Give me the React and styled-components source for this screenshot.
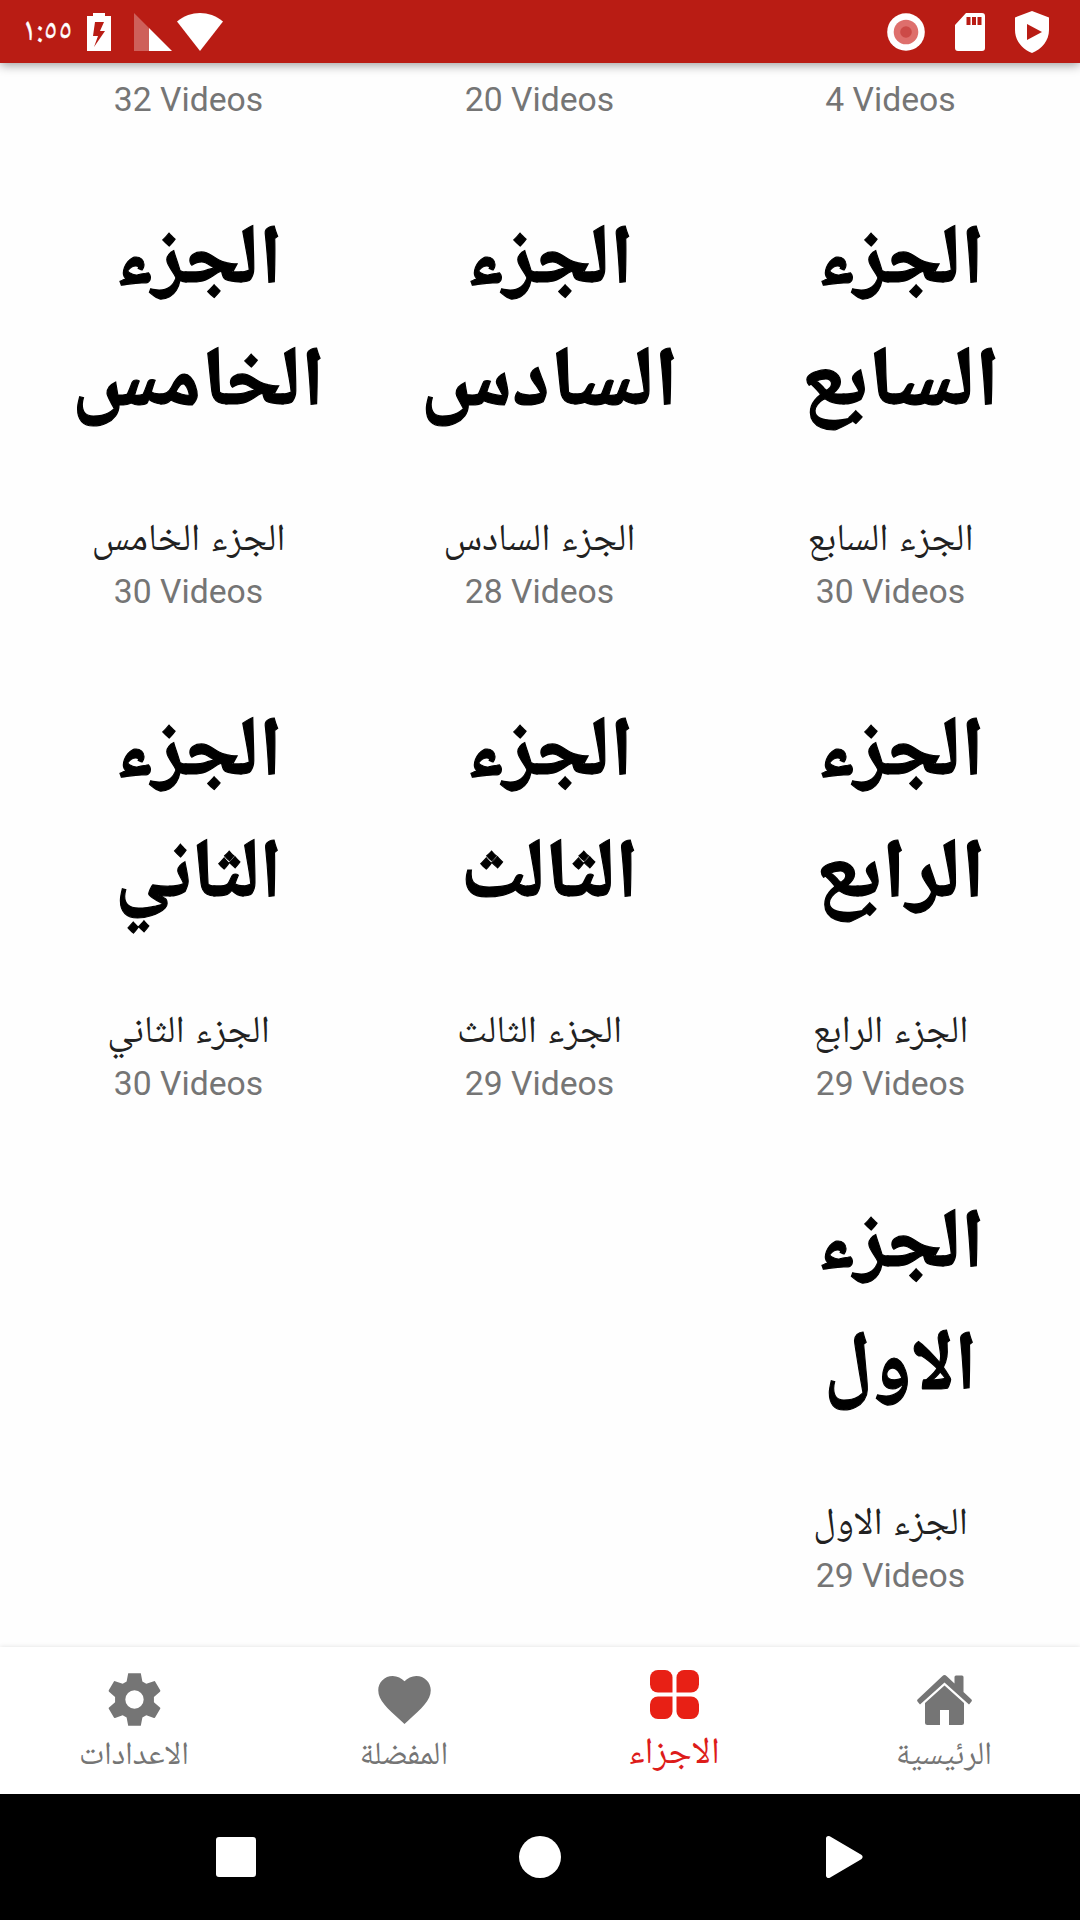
import React from "react";
import styled, { createGlobalStyle } from "styled-components";

const GlobalStyle = createGlobalStyle`
  * {
    box-sizing: border-box;
  }
  body {
    margin: 0;
    background: #fff;
    font-family: Roboto, "Noto Naskh Arabic", serif;
  }
`;

const Screen = styled.div`
  display: flex;
  flex-direction: column;
  width: 1080px;
  height: 1920px;
  overflow: hidden;
  background: #fefefe;
`;

const StatusBar = styled.header`
  position: relative;
  display: flex;
  justify-content: space-between;
  height: 63px;
  flex: none;
  padding: 0 31px 0 22px;
  background: #b91c14;
  box-shadow: 0 2px 10px rgba(0, 0, 0, 0.4);
`;

const StatusGroup = styled.div`
  display: flex;
  align-items: center;
  gap: ${(p) => p.$gap}px;
`;

const Clock = styled.span`
  width: 65px;
  padding-top: 3px;
  font-family: "Noto Naskh Arabic", serif;
  font-size: 32.5px;
  line-height: 60px;
  color: #fff;
  -webkit-text-stroke: 0.4px #fff;
`;

const Content = styled.main`
  flex: 1;
  overflow: hidden;
  padding: 16px 14px 0 13px;
`;

const Grid = styled.div`
  display: grid;
  grid-template-columns: repeat(3, 351px);
  direction: rtl;
  text-align: center;
`;

const Cover = styled.div`
  height: 395px;
  padding: 85px 0 0 20px;
  direction: rtl;
  font-family: "Noto Naskh Arabic", serif;
  font-size: 84px;
  font-weight: 700;
  line-height: 122px;
  color: #000;
  -webkit-text-stroke: 1.2px #000;
`;

const CoverLine = styled.div`
  white-space: nowrap;
  transform: scaleX(${(p) => p.$stretch || 1});
`;

const Name = styled.div`
  height: 57px;
  font-family: "Noto Naskh Arabic", serif;
  font-size: 38.2px;
  line-height: 56px;
  word-spacing: 2px;
  white-space: nowrap;
  color: #212121;
`;

const Count = styled.div`
  height: 40px;
  direction: ltr;
  font-size: 33.7px;
  line-height: 41px;
  color: #757575;
`;

const TabBar = styled.nav`
  position: relative;
  display: grid;
  grid-template-columns: repeat(4, 270px);
  height: 147px;
  flex: none;
  background: #fff;
  box-shadow: 0 0 5px rgba(0, 0, 0, 0.12);
`;

const Tab = styled.div`
  display: flex;
  flex-direction: column;
  align-items: center;
  padding: ${(p) => (p.$active ? 16 : 21)}px 2px 0 0;
  color: ${(p) => (p.$active ? "#dd1c1a" : "#757575")};
`;

const TabLabel = styled.span`
  margin-top: ${(p) => (p.$active ? 4 : 1)}px;
  font-family: "Noto Naskh Arabic", serif;
  font-size: ${(p) => (p.$active ? 37 : 32.4)}px;
  line-height: 50px;
  direction: rtl;
`;

const SystemBar = styled.footer`
  display: flex;
  align-items: center;
  height: 126px;
  flex: none;
  padding: 0 215px;
  justify-content: space-between;
  background: #000;
`;

const Battery = () => (
  <svg width="24" height="38" viewBox="0 0 24 38">
    <path fill="#fff" fillRule="evenodd" d="M6 0h12v3h6v35H0V3h6zM8 9l-2 14h5l-4 11 11-16h-5l4-9z" />
  </svg>
);

const Signal = () => (
  <svg width="38" height="38" viewBox="0 0 38 38">
    <path fill="#fff" fillOpacity="0.3" d="M0 0l15 15v23H0z" />
    <path fill="#fff" d="M15 15l23 23H15z" />
  </svg>
);

const Wifi = () => (
  <svg width="46" height="38" viewBox="0 0 46 38">
    <path fill="#fff" d="M0 8.5C14-2.8 32-2.8 46 8.5L23 38z" />
  </svg>
);

const Recording = () => (
  <svg width="38" height="38" viewBox="0 0 38 38">
    <circle cx="19" cy="19" r="18.8" fill="#fff" />
    <circle cx="19" cy="19" r="12.3" fill="#de6f6c" />
    <circle cx="19" cy="19" r="5.8" fill="#cc4a47" />
  </svg>
);

const SdCard = () => (
  <svg width="30" height="38" viewBox="0 0 30 38">
    <path
      fill="#fff"
      fillRule="evenodd"
      d="M11 0h16a3 3 0 0 1 3 3v32a3 3 0 0 1-3 3H3a3 3 0 0 1-3-3V12zM11.5 4v8h4V4zM17 4v8h4V4zM22.5 4v8h4V4z"
    />
  </svg>
);

const Shield = () => (
  <svg width="34" height="42" viewBox="0 0 34 42">
    <path fill="#fff" fillRule="evenodd" d="M17 0l17 6.5V19c0 10.5-7 19-17 23C7 38 0 29.5 0 19V6.5zM12 13v16l15-8z" />
  </svg>
);

const GearIcon = () => (
  <svg width="63" height="63" viewBox="0 0 24 24">
    <path
      fill="currentColor"
      fillRule="evenodd"
      d="M9.6 2h4.8l.6 3.1 1.500.9 2.900-1a.4.4 0 0 1 .5.200l1.900 3.300a.4.4 0 0 1-.1.500L19.400 11v2l2.300 2a.4.4 0 0 1 .1.500l-1.900 3.300a.4.4 0 0 1-.5.200l-2.900-1-1.500.900-.6 3.100H9.600L9 18.900 7.500 18l-2.900 1a.4.4 0 0 1-.5-.200l-1.900-3.300a.4.4 0 0 1 .1-.5l2.300-2v-2L2.300 9a.4.4 0 0 1-.1-.5l1.900-3.300a.4.4 0 0 1 .5-.2l2.900 1L9 5.100zM12 8.500a3.500 3.500 0 1 0 0 7 3.500 3.500 0 0 0 0-7z"
    />
  </svg>
);

const HeartIcon = () => (
  <svg width="63" height="63" viewBox="0 0 24 24">
    <path
      fill="currentColor"
      d="M12 21.35l-1.45-1.32C5.4 15.36 2 12.28 2 8.5 2 5.42 4.42 3 7.5 3c1.74 0 3.41.81 4.5 2.09C13.09 3.81 14.76 3 16.5 3 19.58 3 22 5.42 22 8.5c0 3.78-3.4 6.86-8.55 11.54z"
    />
  </svg>
);

// four petals, square only at the corner that faces the centre
const PartsIcon = () => (
  <svg width="63" height="63" viewBox="0 0 63 63">
    <g fill="#e82015">
      <path d="M15 7h7a7.500 7.500 0 0 1 7.500 7.500V29.500H15a8 8 0 0 1-8-8V15a8 8 0 0 1 8-8z" />
      <path d="M41 7h7a8 8 0 0 1 8 8v6.500a8 8 0 0 1-8 8H33.500V14.500A7.500 7.500 0 0 1 41 7z" />
      <path d="M15 33.500H29.500V48.500a7.500 7.500 0 0 1-7.500 7.500h-7a8 8 0 0 1-8-8v-6.500a8 8 0 0 1 8-8z" />
      <path d="M33.500 33.500H48a8 8 0 0 1 8 8V48a8 8 0 0 1-8 8h-7a7.500 7.500 0 0 1-7.500-7.500z" />
    </g>
  </svg>
);

const HomeIcon = () => (
  <svg width="63" height="63" viewBox="0 0 63 63">
    <g fill="currentColor">
      <path d="M4.500 31.500L29.500 8a3 3 0 0 1 4 0l8 7.500V9A1.500 1.500 0 0 1 43 7.500h6A1.500 1.500 0 0 1 50.500 9v15l8 7.500a1.500 1.500 0 0 1 0 2L56 36.500 31.500 14.500 7 36.500l-2.500-3a1.500 1.500 0 0 1 0-2z" />
      <path d="M31.500 17.500L51 35v19.500a2.500 2.500 0 0 1-2.500 2.500H36V42h-9v15H14.500a2.500 2.500 0 0 1-2.500-2.500V35z" />
    </g>
  </svg>
);

const topCounts = ["4 Videos", "20 Videos", "32 Videos"];

const parts = [
  { name: "السابع", count: "30 Videos", stretch: 1.06 },
  { name: "السادس", count: "28 Videos", stretch: 1.03 },
  { name: "الخامس", count: "30 Videos", stretch: 1.02 },
  { name: "الرابع", count: "29 Videos", stretch: 1.05 },
  { name: "الثالث", count: "29 Videos", stretch: 0.97 },
  { name: "الثاني", count: "30 Videos", stretch: 0.94 },
  { name: "الاول", count: "29 Videos", stretch: 0.94 },
];

const tabs = [
  { label: "الاعدادات", Icon: GearIcon },
  { label: "المفضلة", Icon: HeartIcon },
  { label: "الاجزاء", Icon: PartsIcon, active: true },
  { label: "الرئيسية", Icon: HomeIcon },
];

const App = () => {
  return (
    <Screen>
      <GlobalStyle />
      <StatusBar>
        <StatusGroup>
          <Clock>١:٥٥</Clock>
          <StatusGroup $gap={23}>
            <Battery />
            <StatusGroup $gap={5}>
              <Signal />
              <Wifi />
            </StatusGroup>
          </StatusGroup>
        </StatusGroup>
        <StatusGroup $gap={30}>
          <Recording />
          <SdCard />
          <Shield />
        </StatusGroup>
      </StatusBar>

      <Content>
        <Grid>
          {topCounts.map((count) => (
            <Count key={count}>{count}</Count>
          ))}
          {parts.map(({ name, count, stretch }) => (
            <div key={name}>
              <Cover>
                <CoverLine>الجزء</CoverLine>
                <CoverLine $stretch={stretch}>{name}</CoverLine>
              </Cover>
              <Name>الجزء {name}</Name>
              <Count>{count}</Count>
            </div>
          ))}
        </Grid>
      </Content>

      <TabBar>
        {tabs.map(({ label, Icon, active }) => (
          <Tab key={label} $active={active}>
            <Icon />
            <TabLabel $active={active}>{label}</TabLabel>
          </Tab>
        ))}
      </TabBar>

      <SystemBar>
        <svg width="42" height="42" viewBox="0 0 42 42">
          <rect x="1" y="1" width="40" height="40" rx="3" fill="#fff" />
        </svg>
        <svg width="42" height="42" viewBox="0 0 42 42">
          <circle cx="21" cy="21" r="21" fill="#fff" />
        </svg>
        <svg width="42" height="42" viewBox="0 0 42 42">
          <path d="M5.500 2.500L37 21 5.500 39.500z" fill="#fff" stroke="#fff" strokeWidth="5" strokeLinejoin="round" />
        </svg>
      </SystemBar>
    </Screen>
  );
};

export default App;
